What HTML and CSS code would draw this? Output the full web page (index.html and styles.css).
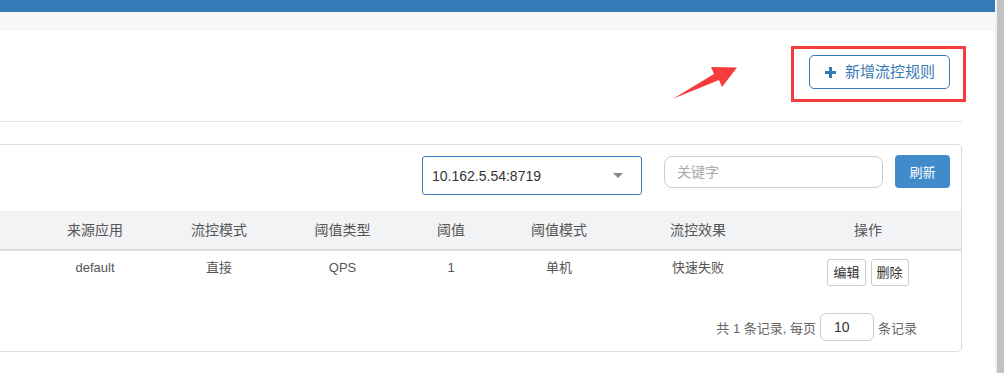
FILE: index.html
```html
<!DOCTYPE html>
<html lang="zh">
<head>
<meta charset="utf-8">
<title>流控规则</title>
<link rel="stylesheet" href="styles.css">
</head>
<body>
<div class="app">
  <div class="page">
    <div class="topbar"></div>
    <div class="subbar"></div>
    <div class="main">
      <div class="toolbar">
        <button class="btn-add" type="button">
          <svg class="plus" width="11" height="11" viewBox="0 0 11 11" aria-hidden="true">
            <rect x="4" y="0" width="3" height="11" fill="#337ab7"/>
            <rect x="0" y="4" width="11" height="3" fill="#337ab7"/>
          </svg>
          <span>新增流控规则</span>
        </button>
      </div>
      <div class="panel">
        <div class="panel-tools">
          <div class="select"><span class="select-value">10.162.5.54:8719</span><span class="caret"></span></div>
          <input class="search" type="text" placeholder="关键字">
          <button class="btn-refresh" type="button">刷新</button>
        </div>
        <table class="rules">
          <colgroup>
            <col class="c0"><col class="c1"><col class="c2"><col class="c3"><col class="c4"><col class="c5"><col class="c6"><col class="c7">
          </colgroup>
          <thead>
            <tr>
              <th></th>
              <th>来源应用</th>
              <th>流控模式</th>
              <th>阈值类型</th>
              <th>阈值</th>
              <th>阈值模式</th>
              <th>流控效果</th>
              <th>操作</th>
            </tr>
          </thead>
          <tbody>
            <tr>
              <td></td>
              <td>default</td>
              <td>直接</td>
              <td>QPS</td>
              <td>1</td>
              <td>单机</td>
              <td>快速失败</td>
              <td><div class="ops"><button class="btn-sm" type="button">编辑</button><button class="btn-sm" type="button">删除</button></div></td>
            </tr>
          </tbody>
        </table>
        <div class="pager">
          <span>共 1 条记录, 每页</span>
          <input class="page-size" type="text" value="10">
          <span>条记录</span>
        </div>
      </div>
    </div>
    <div class="mark-box"></div>
    <svg class="mark-arrow" width="70" height="38" viewBox="670 64 70 38" aria-hidden="true">
      <polygon points="673,98.8 714,74 711,67 737,67.5 722,87 719,80" fill="#f53b3b"/>
    </svg>
  </div>
  <div class="scrollbar"><div class="thumb"></div></div>
</div>
</body>
</html>
```

FILE: styles.css
```css
html, body {
  margin: 0;
  padding: 0;
  height: 100%;
  overflow: hidden;
  background: #fff;
}

body {
  font-family: "Liberation Sans", "Noto Sans CJK SC", sans-serif;
  color: #333;
}

.app {
  display: flex;
  height: 373px;
}

.page {
  position: relative;
  flex: 1;
  background: #fff;
}

.topbar {
  height: 12px;
  background: #337ab7;
}

.subbar {
  height: 19px;
  background: #f7f7f7;
}

.main {
  width: 962px;
}

.toolbar {
  height: 91px;
  box-sizing: border-box;
  padding: 24px 12px 0 0;
  display: flex;
  justify-content: flex-end;
  align-items: flex-start;
  border-bottom: 1px solid #e3e3e3;
}

.btn-add {
  display: flex;
  align-items: center;
  box-sizing: border-box;
  width: 141px;
  height: 34px;
  padding: 0 0 0 15px;
  border: 1px solid #3a78b5;
  border-radius: 5px;
  background: #fff;
  color: #3a78b5;
  font-family: "Liberation Sans", "Noto Sans CJK SC", sans-serif;
  font-size: 15px;
  line-height: 20px;
  cursor: pointer;
}

.plus {
  display: block;
  margin-right: 9px;
}

.panel {
  margin-top: 22px;
  border: 1px solid #dcdcdc;
  border-left: none;
  border-radius: 0 5px 5px 0;
}

.panel-tools {
  display: flex;
  justify-content: flex-end;
  align-items: flex-start;
  padding: 11px 11px 16px 0;
}

.select {
  box-sizing: border-box;
  width: 220px;
  height: 39px;
  border: 1px solid #3c7dbf;
  border-radius: 3px;
  display: flex;
  align-items: center;
  justify-content: space-between;
  padding: 0 18px 0 9px;
  font-size: 14px;
  color: #333;
}

.caret {
  width: 0;
  height: 0;
  border-left: 5px solid transparent;
  border-right: 5px solid transparent;
  border-top: 5px solid #888;
}

.search {
  box-sizing: border-box;
  width: 219px;
  height: 32px;
  margin-left: 22px;
  padding: 0 12px;
  border: 1px solid #ccc;
  border-radius: 8px;
  font-family: "Liberation Sans", "Noto Sans CJK SC", sans-serif;
  font-size: 14px;
  color: #333;
  outline: none;
}

.search::placeholder {
  color: #aaa;
}

.btn-refresh {
  box-sizing: border-box;
  width: 55px;
  height: 33px;
  margin-left: 12px;
  margin-top: -1px;
  border: none;
  border-radius: 4px;
  background: #428bca;
  color: #fff;
  font-family: "Liberation Sans", "Noto Sans CJK SC", sans-serif;
  font-size: 13px;
  cursor: pointer;
}

.rules {
  width: 100%;
  border-collapse: collapse;
  table-layout: fixed;
}

.c0 { width: 32px; }
.c1 { width: 126px; }
.c2 { width: 122px; }
.c3 { width: 125px; }
.c4 { width: 92px; }
.c5 { width: 124px; }
.c6 { width: 154px; }
.c7 { width: 186px; }

.rules th {
  background: #f2f3f5;
  padding: 8px 0;
  line-height: 22px;
  font-size: 14px;
  font-weight: normal;
  color: #555;
  text-align: center;
  border-bottom: 2px solid #dddddd;
}

.rules td {
  padding: 8px 0;
  line-height: 18px;
  font-size: 13px;
  color: #555;
  text-align: center;
  vertical-align: top;
}

.ops {
  display: inline-flex;
  gap: 5px;
}

.btn-sm {
  box-sizing: border-box;
  height: 27px;
  padding: 0 5px;
  border: 1px solid #ccc;
  border-radius: 3px;
  background: #fff;
  color: #333;
  font-family: "Liberation Sans", "Noto Sans CJK SC", sans-serif;
  font-size: 13px;
  line-height: 25px;
  cursor: pointer;
}

.pager {
  display: flex;
  justify-content: flex-end;
  align-items: center;
  padding: 19px 44px 10px 0;
  font-size: 13px;
  color: #666;
}

.page-size {
  box-sizing: border-box;
  width: 54px;
  height: 28px;
  margin: 0 4px;
  padding: 0 0 0 13px;
  border: 1px solid #ccc;
  border-radius: 6px;
  font-family: "Liberation Sans", "Noto Sans CJK SC", sans-serif;
  font-size: 14px;
  color: #333;
  outline: none;
}

.mark-box {
  position: absolute;
  left: 791px;
  top: 46px;
  width: 175px;
  height: 56px;
  box-sizing: border-box;
  border: 3px solid #f53b3b;
}

.mark-arrow {
  position: absolute;
  left: 670px;
  top: 64px;
}

.scrollbar {
  width: 9px;
  background: #f1f1f1;
}

.thumb {
  margin-left: 2px;
  height: 100%;
  background: #c1c1c1;
}
```
